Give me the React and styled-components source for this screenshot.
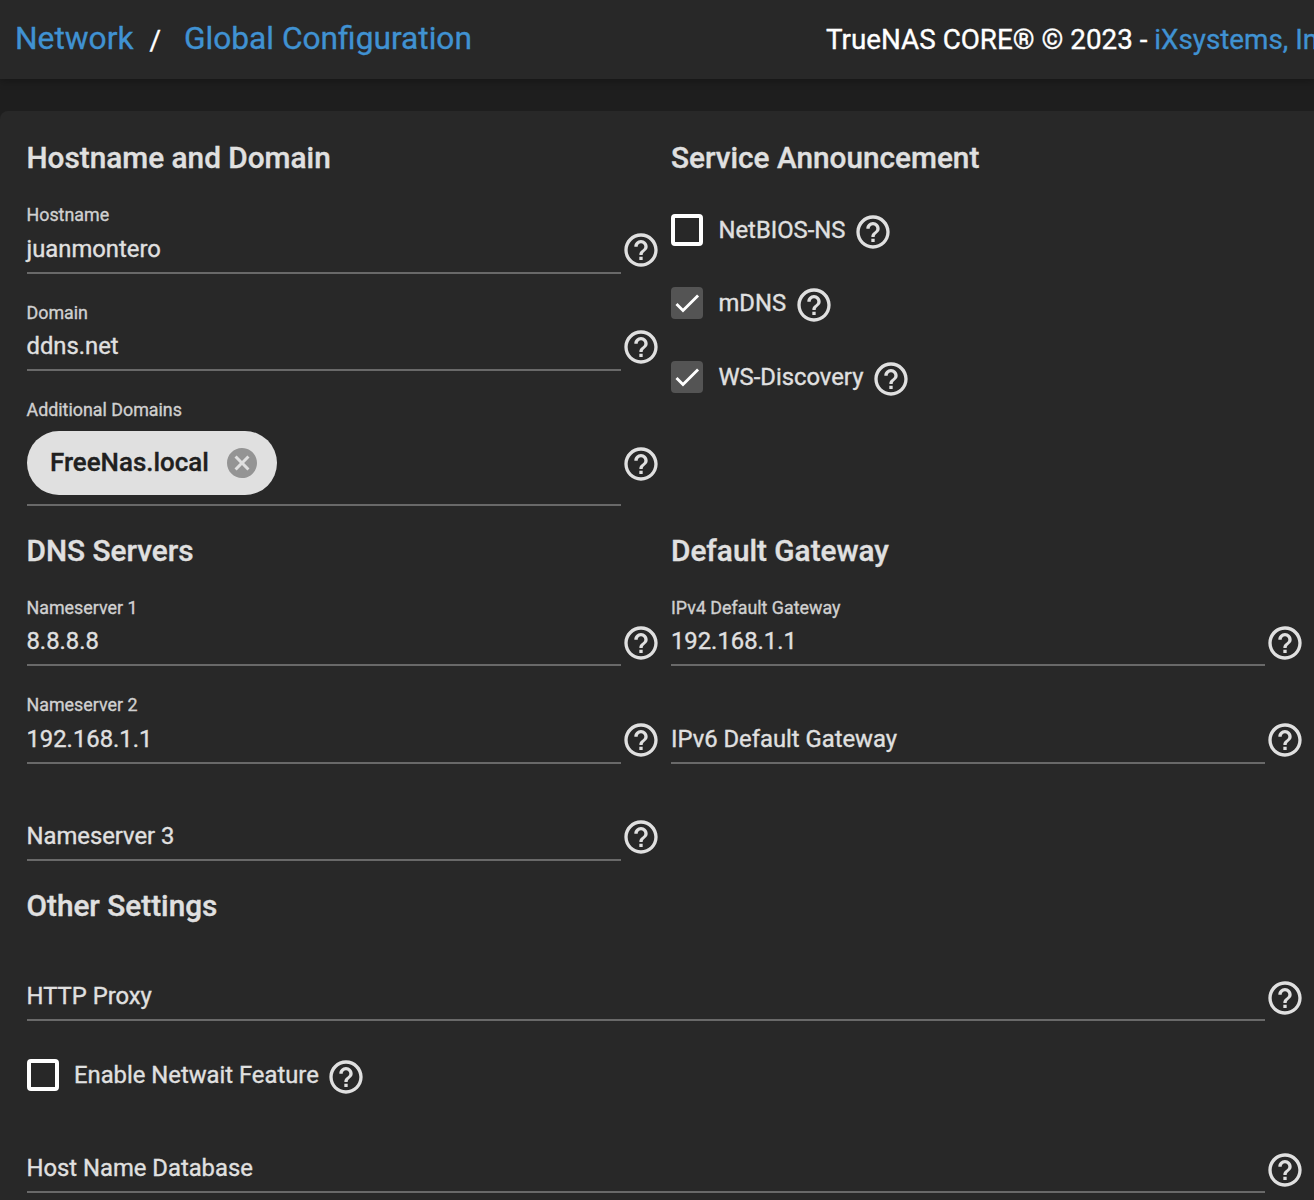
import styled, { createGlobalStyle } from "styled-components";
import { MdCancel, MdHelpOutline } from "react-icons/md";

export default function App() {
  return (
    <Page>
      <GlobalStyle />
      <TopBar>
        <Breadcrumb>
          <Crumb href="#">Network</Crumb>
          <Slash>/</Slash>
          <Crumb href="#">Global Configuration</Crumb>
        </Breadcrumb>
        <Copyright>
          TrueNAS CORE® © 2023 - <CompanyLink href="#">iXsystems, Inc</CompanyLink>
        </Copyright>
      </TopBar>
      <Panel>
        <Columns>
          <Section>
            <Title>Hostname and Domain</Title>
            <Field label="Hostname" value="juanmontero" />
            <Field label="Domain" value="ddns.net" />
            <ChipField label="Additional Domains" chips={["FreeNas.local"]} />
          </Section>
          <Section>
            <Title>Service Announcement</Title>
            <CheckGroup>
              <Checkbox label="NetBIOS-NS" />
              <Checkbox label="mDNS" checked />
              <Checkbox label="WS-Discovery" checked />
            </CheckGroup>
          </Section>
          <Section>
            <Title>DNS Servers</Title>
            <Field label="Nameserver 1" value="8.8.8.8" />
            <Field label="Nameserver 2" value="192.168.1.1" />
            <Field label="Nameserver 3" />
          </Section>
          <Section>
            <Title>Default Gateway</Title>
            <Field label="IPv4 Default Gateway" value="192.168.1.1" />
            <Field label="IPv6 Default Gateway" />
          </Section>
        </Columns>
        <Section>
          <Title>Other Settings</Title>
          <Field label="HTTP Proxy" />
          <CheckGroup>
            <Checkbox label="Enable Netwait Feature" />
          </CheckGroup>
          <Field label="Host Name Database" compact />
        </Section>
      </Panel>
    </Page>
  );
}

function Field({ label, value, compact }) {
  return (
    <FieldRow $compact={compact}>
      <FieldBody>
        {value && <FloatingLabel>{label}</FloatingLabel>}
        <Value>{value || label}</Value>
      </FieldBody>
      <HelpIcon />
    </FieldRow>
  );
}

function ChipField({ label, chips }) {
  return (
    <FieldRow $tall>
      <FieldBody>
        <FloatingLabel $tight>{label}</FloatingLabel>
        <ChipList>
          {chips.map((chip) => (
            <Chip key={chip}>
              {chip}
              <RemoveIcon />
            </Chip>
          ))}
        </ChipList>
      </FieldBody>
      <HelpIcon />
    </FieldRow>
  );
}

function Checkbox({ label, checked }) {
  return (
    <CheckRow>
      <Box $checked={checked}>
        {checked && (
          <svg viewBox="0 0 24 24" width="32" height="32">
            <path d="M4.1 12.7 9 17.6 20.3 6.3" fill="none" stroke="#fff" strokeWidth="2.13" />
          </svg>
        )}
      </Box>
      <CheckLabel>{label}</CheckLabel>
      <HelpIcon />
    </CheckRow>
  );
}

/* STYLES */
const GlobalStyle = createGlobalStyle`
  * {
    box-sizing: border-box;
  }

  body {
    margin: 0;
    background-color: #1e1e1e;
    color: #e0e0e0;
    font-family: Roboto, sans-serif;
    -webkit-text-stroke: 0.35px;
  }
`;

const Page = styled.div`
  display: flex;
  flex-direction: column;
  width: 1314px;
  height: 1200px;
  overflow: hidden;
  background-color: #1e1e1e;
`;

const TopBar = styled.header`
  display: flex;
  flex-shrink: 0;
  align-items: center;
  height: 79px;
  padding-left: 15px;

  background-color: #282828;
  box-shadow: 0 2px 8px rgba(0, 0, 0, 0.3);
  white-space: nowrap;
`;

const Breadcrumb = styled.nav`
  display: flex;
  flex: 0 0 811px;
  align-items: center;
  padding-bottom: 1px;
`;

const Crumb = styled.a`
  color: #4092d2;
  font-size: 31.7px;
  line-height: 40px;
  text-decoration: none;
`;

const Slash = styled.span`
  margin: 2px 23px 0 16px;
  color: #ffffff;
  font-size: 27.8px;
`;

const Copyright = styled.div`
  color: #ffffff;
  font-size: 27.8px;
`;

const CompanyLink = styled.a`
  color: #4092d2;
  text-decoration: none;
`;

const Panel = styled.main`
  flex: none;
  margin-top: 32px;
  padding: 27px 9px 40px 26.5px;

  border-radius: 8px 0 0 0;
  background-color: #282828;
`;

const Columns = styled.div`
  display: grid;
  grid-template-columns: 634.5px 634px;
  gap: 25.1px 10px;
  margin-bottom: 25.1px;
`;

const Section = styled.section`
  min-width: 0;
`;

const Title = styled.h4`
  height: 38.25px;
  margin: 0;

  font-size: 29.75px;
  font-weight: 500;
  line-height: 40px;
`;

const HelpIcon = styled(MdHelpOutline)`
  flex: none;
  width: 40px;
  height: 40px;
  color: #e0e0e0;
`;

const FieldRow = styled.div`
  display: flex;
  align-items: flex-end;
  height: ${({ $tall, $compact }) => ($tall ? "135px" : $compact ? "81.5px" : "97.25px")};

  ${HelpIcon} {
    margin-bottom: ${({ $tall }) => ($tall ? "21.5px" : "3.6px")};
  }
`;

const FieldBody = styled.div`
  flex: 1;
  border-bottom: 2px solid #696969;
`;

const FloatingLabel = styled.div`
  margin-bottom: ${({ $tight }) => ($tight ? "11px" : "9.25px")};
  color: #d0d0d0;
  font-size: 17.85px;
  line-height: 21px;
`;

const Value = styled.div`
  padding-bottom: 9px;
  font-size: 23.8px;
  line-height: 28px;
`;

const ChipList = styled.div`
  display: flex;
  padding-bottom: 9px;
`;

const Chip = styled.span`
  display: flex;
  align-items: center;
  height: 64px;
  padding: 0 17px 1px 23.5px;

  border-radius: 32px;
  background-color: #e0e0e0;
  color: #202020;
  font-size: 25.9px;
  font-weight: 500;
`;

const RemoveIcon = styled(MdCancel)`
  width: 36px;
  height: 36px;
  margin: 1px 0 0 15px;
  color: #949494;
`;

const CheckGroup = styled.div`
  padding-top: 16.75px;
`;

const CheckRow = styled.div`
  display: flex;
  align-items: center;
  height: 73.5px;

  ${HelpIcon} {
    margin: 4px 0 0 7.5px;
  }
`;

const Box = styled.span`
  display: flex;
  flex: none;
  width: 32px;
  height: 32px;
  margin-right: 15.5px;

  border: ${({ $checked }) => ($checked ? "none" : "4px solid #ffffff")};
  border-radius: 4px;
  background-color: ${({ $checked }) => ($checked ? "#545454" : "transparent")};
`;

const CheckLabel = styled.span`
  font-size: 23.8px;
  line-height: 28px;
`;
